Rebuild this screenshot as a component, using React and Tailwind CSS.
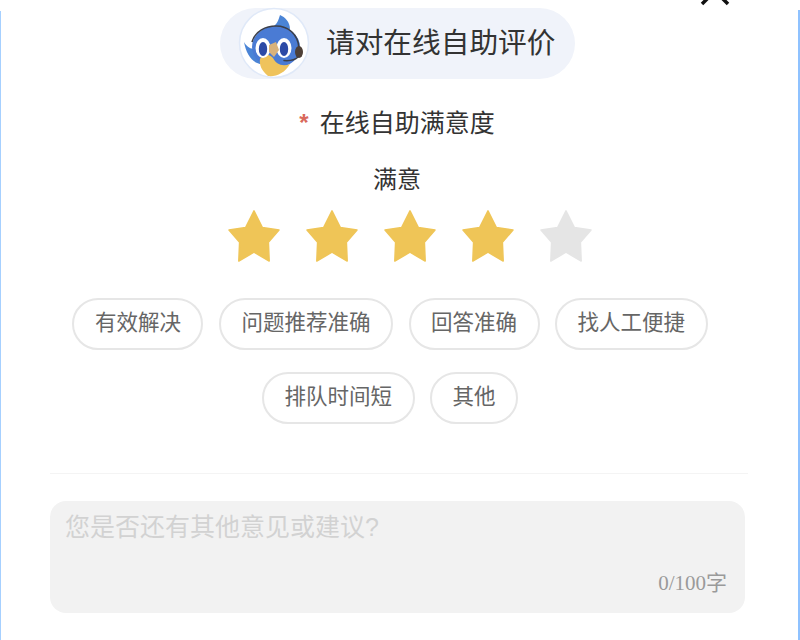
import React from 'react';

const tagRows = [
  ['有效解决', '问题推荐准确', '回答准确', '找人工便捷'],
  ['排队时间短', '其他'],
];

const Star = ({ active }) => (
  <svg viewBox="0 0 54 54" className="w-[54px] h-[54px]">
    <path
      d="M27 1.8 L35.4 18.6 L52 21 L41.4 33.2 L42.2 52 L27 43.2 L11.8 52 L12.6 33.2 L2 21 L18.6 18.6 Z"
      fill={active ? '#efc557' : '#e5e5e5'}
      stroke={active ? '#efc557' : '#e5e5e5'}
      strokeWidth="1.5"
      strokeLinejoin="round"
    />
  </svg>
);

const Mascot = () => (
  <svg viewBox="0 0 84 80" className="w-[84px] h-[80px] shrink-0">
    <circle cx="42" cy="39" r="34.5" fill="#ffffff" stroke="#e0e9f8" strokeWidth="1.5" />
    <path d="M42 22 C46 19 47 14 48 11 C53 13 58 18 58 25 C52 24 46 23 42 22 Z" fill="#4a84d6" />
    <path d="M12 38 C15 43 19 46 24 44 L30 60 C21 60 14 50 12 38 Z" fill="#4a84d6" />
    <ellipse cx="44" cy="43" rx="24" ry="21" fill="#4a7bd4" />
    <path d="M28 55 C31 49 38 50 41 54 C44 60 50 63 58 60 C53 69 44 73 36 72 C30 67 27 61 28 55 Z" fill="#efc35c" />
    <ellipse cx="31" cy="44" rx="7.5" ry="10" fill="#ffffff" />
    <ellipse cx="52" cy="44" rx="7.5" ry="10" fill="#ffffff" />
    <ellipse cx="31" cy="45" rx="4.2" ry="7" fill="#2c4aa6" />
    <ellipse cx="52" cy="45" rx="4.2" ry="7" fill="#2c4aa6" />
    <path d="M37 41 L44 38 L47 46 L42 53 L37 48 Z" fill="#d9b27a" />
    <path d="M20 38 C23 27 34 22 44 22 C56 22 66 30 67 44" fill="none" stroke="#3b3f4a" strokeWidth="1.6" />
    <ellipse cx="67" cy="48" rx="4" ry="6" fill="#4e4038" />
    <path d="M66 53 C63 56 58 57 52 56.5" fill="none" stroke="#3b3f4a" strokeWidth="1.5" strokeLinecap="round" />
  </svg>
);

export default function App() {
  return (
    <div
      className="relative w-[800px] h-[640px] overflow-hidden bg-white flex flex-col items-center text-[#333333]"
      style={{ fontFamily: '"Liberation Sans", "Noto Sans CJK SC", sans-serif' }}
    >
      {/* side edges of the sheet */}
      <div className="absolute left-0 top-[11px] bottom-0 w-px bg-[#a6d0ff]" />
      <div className="absolute right-0 top-[10px] bottom-0 w-[2px] bg-[#8fc2ff]" />

      {/* close button, cut off by the top of the page */}
      <svg viewBox="0 0 30 30" className="absolute left-[700px] top-[-24px] w-[30px] h-[30px]">
        <path d="M2 2 L28 28 M28 2 L2 28" stroke="#111111" strokeWidth="3.5" fill="none" />
      </svg>

      <div className="mt-[8px] mr-[5px] w-[355px] h-[71px] rounded-full bg-[#f0f3fa] flex items-center pl-[12px]">
        <div className="mr-[10px] w-[84px] h-[80px]">
          <Mascot />
        </div>
        <span className="text-[28.7px] leading-none">请对在线自助评价</span>
      </div>

      <div className="mt-[29px] mr-[6px] h-[30px] flex items-center text-[25px] leading-none">
        <span className="text-[#d9695c] mr-[11px] text-[24px] font-bold">*</span>
        <span>在线自助满意度</span>
      </div>

      <div className="mt-[27px] mr-[6px] h-[30px] flex items-center text-[24px] leading-none">满意</div>

      <div className="mt-[14px] ml-[20px] flex gap-[24px]">
        {[1, 2, 3, 4, 5].map((n) => (
          <Star key={n} active={n < 5} />
        ))}
      </div>

      <div className="mt-[35px] mr-[20px] flex flex-col items-center gap-[22px]">
        {tagRows.map((row, i) => (
          <div key={i} className="flex gap-[15.5px]">
            {row.map((tag) => (
              <div
                key={tag}
                className="h-[52px] px-[20.5px] flex items-center rounded-full border-2 border-[#e6e6e6] text-[21.5px] leading-none text-[#666666]"
              >
                {tag}
              </div>
            ))}
          </div>
        ))}
      </div>

      <div className="mt-[49px] w-[698px] h-px bg-[#f4f4f4] self-start ml-[50px]" />

      <div className="mt-[27px] w-[695px] h-[112px] self-start ml-[50px] rounded-[16px] bg-[#f2f2f2] flex flex-col justify-between px-[15px] pt-[10px] pb-[17px]">
        <div className="text-[25px] leading-[32px] text-[#d2d2d2]">您是否还有其他意见或建议?</div>
        <div
          className="self-end pr-[3px] text-[21px] leading-[26px] text-[#9a9a9a]"
          style={{ fontFamily: '"Liberation Serif", "Noto Sans CJK SC", serif' }}
        >
          0/100字
        </div>
      </div>
    </div>
  );
}
